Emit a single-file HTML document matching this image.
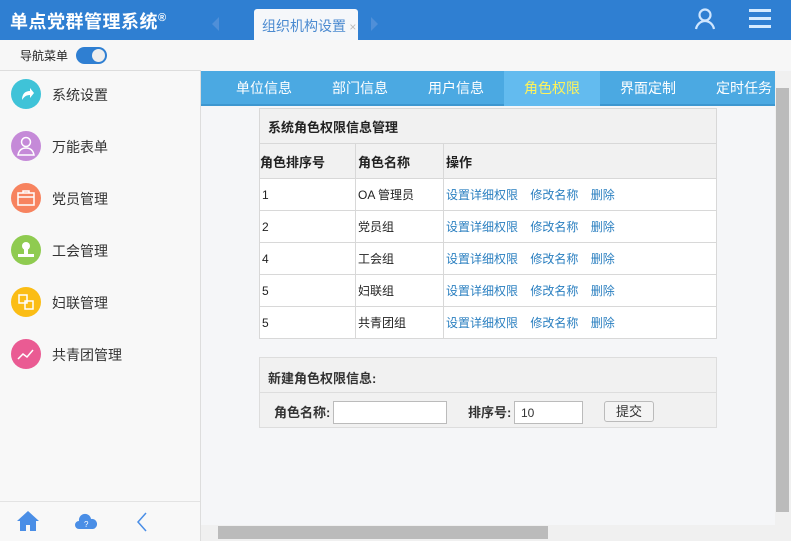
<!DOCTYPE html>
<html><head><meta charset="utf-8"><style>
*{margin:0;padding:0;box-sizing:border-box}
body{width:791px;height:541px;overflow:hidden;font-family:"Liberation Sans","Noto Sans CJK SC",sans-serif;background:#f5f6f8;position:relative;font-size:13px;color:#333}
.abs{position:absolute}
#hdr{left:0;top:0;width:791px;height:40px;background:#2f7fd2}
#title{left:10px;top:8px;color:#fff;font-size:18px;font-weight:bold;letter-spacing:0.5px}
#tab{left:254px;top:9px;width:104px;height:31px;background:#f5f7fa;border-radius:3px 3px 0 0;color:#4b8ad0;font-size:14px;padding:7px 0 0 8px}
#nav{left:0;top:40px;width:791px;height:30px;background:#f7f7f7}
#side{left:0;top:70px;width:201px;height:471px;background:#f8f8f8;border-right:1px solid #ddd;border-top:1px solid #ddd}
.mi{position:absolute;left:11px;width:180px;height:32px}
.mi .c{position:absolute;left:0;top:0;width:30px;height:30px;border-radius:50%}
.mi .c svg{position:absolute;left:0;top:0}
.mi span{position:absolute;left:41px;top:6px;font-size:14px;color:#333}
#tabs{left:201px;top:71px;width:574px;height:35px;background:#4ba9e2;border-bottom:2px solid #3d97d0}
.t{position:absolute;top:0;width:96px;height:35px;text-align:center;line-height:35px;color:#fff;font-size:14px}
table{border-collapse:collapse;background:#fff;font-size:12px}
td{border:1px solid #d8d8d8;height:32px;padding-left:2px;color:#222}
.a{color:#2a7fc0;margin-right:9px}
</style></head><body>
<div id="hdr" class="abs"></div>
<div id="title" class="abs">单点党群管理系统<sup style="font-size:11px">®</sup></div>
<div class="abs" style="left:212px;top:17px;width:0;height:0;border-top:7px solid transparent;border-bottom:7px solid transparent;border-right:7px solid #4f8fd8"></div>
<div class="abs" style="left:371px;top:17px;width:0;height:0;border-top:7px solid transparent;border-bottom:7px solid transparent;border-left:7px solid #4f8fd8"></div>
<div id="tab" class="abs">组织机构设置<span style="color:#bbb;font-size:12px"> ×</span></div>
<svg class="abs" style="left:693px;top:7px" width="24" height="24" viewBox="0 0 24 24" fill="none" stroke="#cfe6ff" stroke-width="2.2"><circle cx="12" cy="8" r="5.5"/><path d="M3 22c1-5 5-8 9-8s8 3 9 8"/></svg>
<div class="abs" style="left:749px;top:9px;width:22px;height:3px;background:#d6ebff"></div>
<div class="abs" style="left:749px;top:17px;width:22px;height:3px;background:#d6ebff"></div>
<div class="abs" style="left:749px;top:25px;width:22px;height:3px;background:#d6ebff"></div>
<div id="nav" class="abs"></div>
<div class="abs" style="left:20px;top:47px;font-size:12px;color:#222">导航菜单</div>
<div class="abs" style="left:76px;top:47px;width:31px;height:17px;border-radius:9px;background:#2f7fd2"><div style="position:absolute;right:2px;top:2px;width:13px;height:13px;border-radius:50%;background:#eee"></div></div>
<div id="side" class="abs">
<div class="mi" style="top:8px"><div class="c" style="background:#3fc3d8"><svg width="30" height="30"><path d="M11 21c0-6 3-9 8-9v-3l4 5-4 5v-3c-4 0-6 2-8 5z" fill="#fff"/></svg></div><span>系统设置</span></div>
<div class="mi" style="top:60px"><div class="c" style="background:#c58ad8"><svg width="30" height="30" fill="none" stroke="#fff" stroke-width="1.5"><circle cx="15" cy="11" r="4.5"/><path d="M7 24c1-5 4-7 8-7s7 2 8 7z"/></svg></div><span>万能表单</span></div>
<div class="mi" style="top:112px"><div class="c" style="background:#f7835f"><svg width="30" height="30" fill="none" stroke="#fff" stroke-width="1.5"><rect x="7" y="10" width="16" height="12"/><path d="M12 10V8h6v2M7 14h16"/></svg></div><span>党员管理</span></div>
<div class="mi" style="top:164px"><div class="c" style="background:#8fcb50"><svg width="30" height="30" fill="#fff"><circle cx="15" cy="11" r="4"/><rect x="13" y="14" width="4" height="5"/><rect x="7" y="19" width="16" height="3"/></svg></div><span>工会管理</span></div>
<div class="mi" style="top:216px"><div class="c" style="background:#fbbd15"><svg width="30" height="30" fill="none" stroke="#fff" stroke-width="1.5"><rect x="8" y="8" width="8" height="8"/><rect x="14" y="14" width="8" height="8"/></svg></div><span>妇联管理</span></div>
<div class="mi" style="top:268px"><div class="c" style="background:#ea5b93"><svg width="30" height="30" fill="none" stroke="#fff" stroke-width="1.5"><path d="M7 20l5-5 4 3 6-7"/></svg></div><span>共青团管理</span></div>
<div style="position:absolute;left:0;top:430px;width:200px;height:1px;background:#e3e3e3"></div>
<svg style="position:absolute;left:16px;top:439px" width="24" height="22" viewBox="0 0 24 22"><path d="M12 1L1 11h3v10h6v-6h4v6h6V11h3z" fill="#4a8ee6"/></svg>
<svg style="position:absolute;left:74px;top:441px" width="24" height="18" viewBox="0 0 24 18"><path d="M5 17a4 4 0 010-8 6 6 0 0112-2 5 5 0 012 10z" fill="#4a8ee6"/><text x="10" y="15" font-size="8" fill="#fff">?</text></svg>
<svg style="position:absolute;left:136px;top:441px" width="12" height="20"><path d="M10 1L2 10l8 9" stroke="#4a8ee6" fill="none" stroke-width="1.5"/></svg>
</div>
<div id="tabs" class="abs">
<div class="t" style="left:15px">单位信息</div><div class="t" style="left:111px">部门信息</div><div class="t" style="left:207px">用户信息</div>
<div class="t" style="left:303px;background:#63bbef;color:#fff35a">角色权限</div><div class="t" style="left:399px">界面定制</div><div class="t" style="left:495px">定时任务</div>
</div>
<table class="abs" style="left:259px;top:108px;width:458px">
<tr><td colspan="3" style="background:#f1f1f1;height:35px;padding-left:8px;font-weight:bold;font-size:13px">系统角色权限信息管理</td></tr>
<tr style="background:#f1f1f1;font-weight:bold;font-size:13px"><td style="width:96px;height:35px;padding-left:0">角色排序号</td><td style="width:88px">角色名称</td><td>操作</td></tr>
<tr><td>1</td><td>OA 管理员</td><td><span class="a">设置详细权限</span> <span class="a">修改名称</span> <span class="a">删除</span></td></tr>
<tr><td>2</td><td>党员组</td><td><span class="a">设置详细权限</span> <span class="a">修改名称</span> <span class="a">删除</span></td></tr>
<tr><td>4</td><td>工会组</td><td><span class="a">设置详细权限</span> <span class="a">修改名称</span> <span class="a">删除</span></td></tr>
<tr><td>5</td><td>妇联组</td><td><span class="a">设置详细权限</span> <span class="a">修改名称</span> <span class="a">删除</span></td></tr>
<tr><td>5</td><td>共青团组</td><td><span class="a">设置详细权限</span> <span class="a">修改名称</span> <span class="a">删除</span></td></tr>
</table>
<div class="abs" style="left:259px;top:357px;width:458px;height:71px;background:#f1f1f1;border:1px solid #ddd">
<div style="height:35px;border-bottom:1px solid #ddd;padding:10px 0 0 8px;font-weight:bold">新建角色权限信息:</div>
<div style="position:absolute;left:14px;top:44px;font-weight:bold">角色名称:</div>
<div style="position:absolute;left:73px;top:43px;width:114px;height:23px;background:#fff;border:1px solid #bbb"></div>
<div style="position:absolute;left:208px;top:44px;font-weight:bold">排序号:</div>
<div style="position:absolute;left:254px;top:43px;width:69px;height:23px;background:#fff;border:1px solid #bbb;padding:4px 6px;font-size:12px">10</div>
<div style="position:absolute;left:344px;top:43px;width:50px;height:21px;background:#f4f4f4;border:1px solid #bbb;border-radius:3px;text-align:center;font-size:13px;line-height:19px">提交</div>
</div>
<div class="abs" style="left:775px;top:71px;width:16px;height:454px;background:#f0f0f0"><div style="position:absolute;left:1px;top:17px;width:13px;height:424px;background:#bbb"></div></div>
<div class="abs" style="left:201px;top:525px;width:590px;height:16px;background:#f0f0f0"><div style="position:absolute;left:17px;top:1px;width:330px;height:13px;background:#bbb"></div></div>
</body></html>
